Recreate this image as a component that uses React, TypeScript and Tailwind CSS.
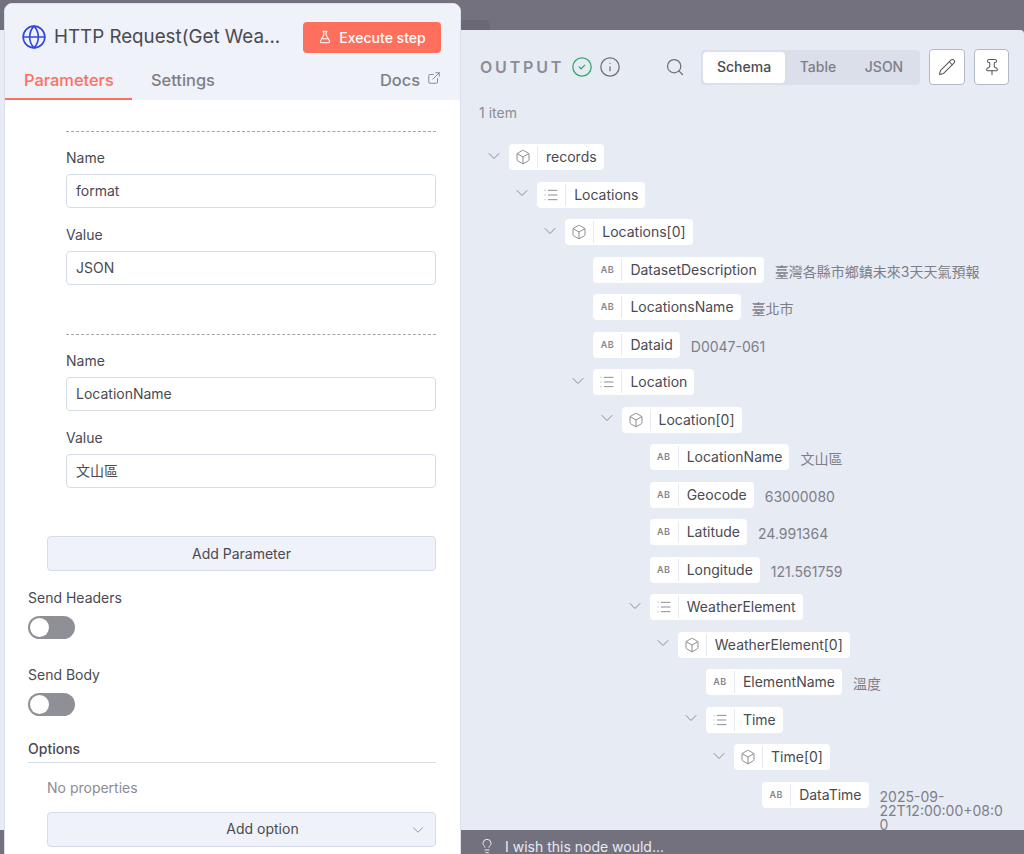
import { Box, ChevronDown, ExternalLink, FlaskConical, Globe, Info, Lightbulb, List, Pencil, Pin, Search, CircleCheck } from 'lucide-react';

type Row = { depth: number; type: 'object' | 'array' | 'string'; name: string; value?: string };

const rows: Row[] = [
  { depth: 0, type: 'object', name: 'records' },
  { depth: 1, type: 'array', name: 'Locations' },
  { depth: 2, type: 'object', name: 'Locations[0]' },
  { depth: 3, type: 'string', name: 'DatasetDescription', value: '臺灣各縣市鄉鎮未來3天天氣預報' },
  { depth: 3, type: 'string', name: 'LocationsName', value: '臺北市' },
  { depth: 3, type: 'string', name: 'Dataid', value: 'D0047-061' },
  { depth: 3, type: 'array', name: 'Location' },
  { depth: 4, type: 'object', name: 'Location[0]' },
  { depth: 5, type: 'string', name: 'LocationName', value: '文山區' },
  { depth: 5, type: 'string', name: 'Geocode', value: '63000080' },
  { depth: 5, type: 'string', name: 'Latitude', value: '24.991364' },
  { depth: 5, type: 'string', name: 'Longitude', value: '121.561759' },
  { depth: 5, type: 'array', name: 'WeatherElement' },
  { depth: 6, type: 'object', name: 'WeatherElement[0]' },
  { depth: 7, type: 'string', name: 'ElementName', value: '溫度' },
  { depth: 7, type: 'array', name: 'Time' },
  { depth: 8, type: 'object', name: 'Time[0]' },
  { depth: 9, type: 'string', name: 'DataTime', value: '2025-09-22T12:00:00+08:00' },
];

function TreeRow({ row }: { row: Row }) {
  return (
    <div className="flex items-start h-[26px]" style={{ marginLeft: row.depth * 28.13 }}>
      <div className="w-[28px] h-[26px] flex items-center shrink-0">
        {row.type !== 'string' && <ChevronDown size={20} strokeWidth={1.2} className="text-[#8d8d96] ml-[3px] -mt-[3px]" />}
      </div>
      <div className="flex items-center h-[26px] bg-white rounded-[4px] pr-[7px] shrink-0">
        <div className="w-[29px] h-[22px] flex items-center justify-center border-r border-[#e6eaf3] shrink-0">
          {row.type === 'object' && <Box size={16} strokeWidth={1.25} className="text-[#77777f]" />}
          {row.type === 'array' && <List size={16} strokeWidth={1.25} className="text-[#77777f]" />}
          {row.type === 'string' && <span className="text-[9px] font-semibold tracking-[0.3px] text-[#85858d]">AB</span>}
        </div>
        <span className="pl-[8px] text-[14px] leading-[20px] text-[#4a4a52] whitespace-nowrap">{row.name}</span>
      </div>
      {row.value && (
        <span className="ml-[11px] mt-[8px] max-w-[128px] text-[14px] leading-[14px] text-[#7e7e88] [overflow-wrap:anywhere] has-[.wide]:max-w-none">
          {row.name === 'DataTime' ? row.value : <span className="wide whitespace-nowrap">{row.value}</span>}
        </span>
      )}
    </div>
  );
}

function Field({ label, value }: { label: string; value: string }) {
  return (
    <div>
      <div className="h-[20px] text-[14px] leading-[20px] text-[#4a4a52]">{label}</div>
      <div className="mt-[6px] h-[34px] flex items-center pl-[9px] pb-[2px] bg-white border border-[#d5dbe8] rounded-[4px] text-[14px] text-[#4a4a52]">
        {value}
      </div>
    </div>
  );
}

function ParamGroup({ name, value }: { name: string; value: string }) {
  return (
    <div className="ml-[61px] mr-[24px] border-t border-dashed border-[#a3a3aa] pt-[16px] flex flex-col gap-[17px]">
      <Field label="Name" value={name} />
      <Field label="Value" value={value} />
    </div>
  );
}

function Toggle() {
  return (
    <div className="w-[47px] h-[23px] rounded-full bg-[#8f9095] flex items-center pl-[2px]">
      <div className="w-[19px] h-[19px] rounded-full bg-white" />
    </div>
  );
}

export default function App() {
  return (
    <div className="relative w-[1024px] h-[854px] overflow-hidden bg-[#73717d] font-['Inter','Noto_Sans_CJK_TC',sans-serif]">
      {/* tab peeking above the output panel */}
      <div className="absolute left-[460px] top-[20px] w-[30px] h-[10px] rounded-t-[4px] bg-[#6a6874]" />

      {/* output panel */}
      <div className="mt-[30px] h-[800px] bg-[#e7ebf4] rounded-tr-[4px] pl-[479px] overflow-hidden">
        <div className="flex items-center h-[36px] mt-[19px]">
          <span className="ml-[1px] w-[92px] text-[16px] font-semibold tracking-[2.8px] text-[#8c8c95]">OUTPUT</span>
          <CircleCheck size={22} strokeWidth={1.4} className="-ml-[1px] text-[#2fa866]" />
          <Info size={22} strokeWidth={1.4} className="ml-[6px] text-[#6f6f78]" />
          <Search size={20} strokeWidth={1.5} className="ml-[44px] text-[#6f6f78]" />
          <div className="ml-[16px] flex items-center h-[35px] w-[219px] p-[2px] rounded-[4px] bg-[#dbdfe9] text-[14px]">
            <div className="w-[82px] h-[31px] flex items-center justify-center pb-[2px] bg-white rounded-[4px] font-medium text-[#4a4a52]">Schema</div>
            <div className="w-[66px] text-center pb-[2px] text-[#7e7e88] font-medium">Table</div>
            <div className="w-[66px] text-center pb-[2px] text-[#7e7e88] font-medium">JSON</div>
          </div>
          <button className="ml-[9px] w-[36px] h-[36px] flex items-center justify-center bg-white border border-[#b4b8c4] rounded-[4px] text-[#55555d]">
            <Pencil size={18} strokeWidth={1.4} />
          </button>
          <button className="ml-[9px] w-[35px] h-[36px] flex items-center justify-center bg-white border border-[#b4b8c4] rounded-[4px] text-[#55555d]">
            <Pin size={18} strokeWidth={1.4} />
          </button>
        </div>
        <div className="mt-[18px] text-[14px] leading-[20px] text-[#8c8c95]">1 item</div>
        <div className="mt-[21px] ml-[2px] flex flex-col gap-[11.5px]">
          {rows.map((row) => (
            <TreeRow key={row.name} row={row} />
          ))}
        </div>
      </div>

      {/* feedback bar */}
      <div className="h-[24px] pl-[479px] pt-[8px] flex items-center text-[14px] text-[#e7ebf4]">
        <Lightbulb size={16} strokeWidth={1.5} />
        <span className="ml-[10px]">I wish this node would...</span>
      </div>

      {/* node settings panel */}
      <div className="absolute left-[4px] top-[3px] w-[457px] h-[860px] bg-white rounded-[8px] border border-[#dbe0ea] overflow-hidden">
        <div className="bg-[#eff2f8] h-[96px]">
          <div className="flex items-center h-[62px] pt-[4px] pl-[16px] pr-[19px]">
            <Globe size={26} strokeWidth={1.5} className="text-[#3347e0] shrink-0" />
            <span className="ml-[7px] text-[18.75px] text-[#4a4a52] whitespace-nowrap">HTTP Request(Get Wea...</span>
            <button className="ml-auto w-[138px] h-[31px] flex items-center justify-center gap-[7px] bg-[#ff6f5e] rounded-[4px] text-white text-[14px] font-medium shrink-0">
              <FlaskConical size={14} strokeWidth={1.75} />
              Execute step
            </button>
          </div>
          <div className="flex items-start h-[34px] text-[16.4px] font-medium">
            <div className="w-[127px] h-[34px] pl-[19px] pt-[2px] text-[#ff6f5e] border-b-2 border-[#ff6f5e]">Parameters</div>
            <div className="ml-[19px] pt-[2px] text-[#7e7e88]">Settings</div>
            <div className="ml-auto mr-[19px] pt-[2px] flex items-center gap-[7px] text-[#7e7e88]">
              Docs
              <ExternalLink size={14} strokeWidth={1.5} className="-mt-[4px]" />
            </div>
          </div>
        </div>

        <div className="pt-[31px]">
          <ParamGroup name="format" value="JSON" />
          <div className="mt-[49px]">
            <ParamGroup name="LocationName" value="文山區" />
          </div>
          <div className="mt-[48px] ml-[42px] mr-[24px] h-[35px] flex items-center justify-center pb-[1px] bg-[#eff2f8] border border-[#d5dbe8] rounded-[4px] text-[14px] text-[#4a4a52]">
            Add Parameter
          </div>
          <div className="mt-[17px] ml-[23px] h-[20px] text-[14px] leading-[20px] text-[#4a4a52]">Send Headers</div>
          <div className="mt-[8px] ml-[23px]"><Toggle /></div>
          <div className="mt-[26px] ml-[23px] h-[20px] text-[14px] leading-[20px] text-[#4a4a52]">Send Body</div>
          <div className="mt-[8px] ml-[23px]"><Toggle /></div>
          <div className="mt-[23px] ml-[23px] mr-[24px] h-[23px] text-[14px] leading-[20px] font-medium text-[#4a4a52] border-b border-[#d5dbe8] box-content">Options</div>
          <div className="mt-[15px] ml-[42px] h-[20px] text-[14px] leading-[20px] text-[#8c8c95]">No properties</div>
          <div className="mt-[14px] ml-[42px] mr-[24px] h-[35px] relative flex items-center justify-center pl-[42px] pb-[2px] bg-[#eff2f8] border border-[#d5dbe8] rounded-[4px] text-[14px] text-[#4a4a52]">
            Add option
            <ChevronDown size={18} strokeWidth={1.25} className="absolute right-[8px] top-[8px] text-[#8c8c95]" />
          </div>
        </div>
      </div>
    </div>
  );
}
